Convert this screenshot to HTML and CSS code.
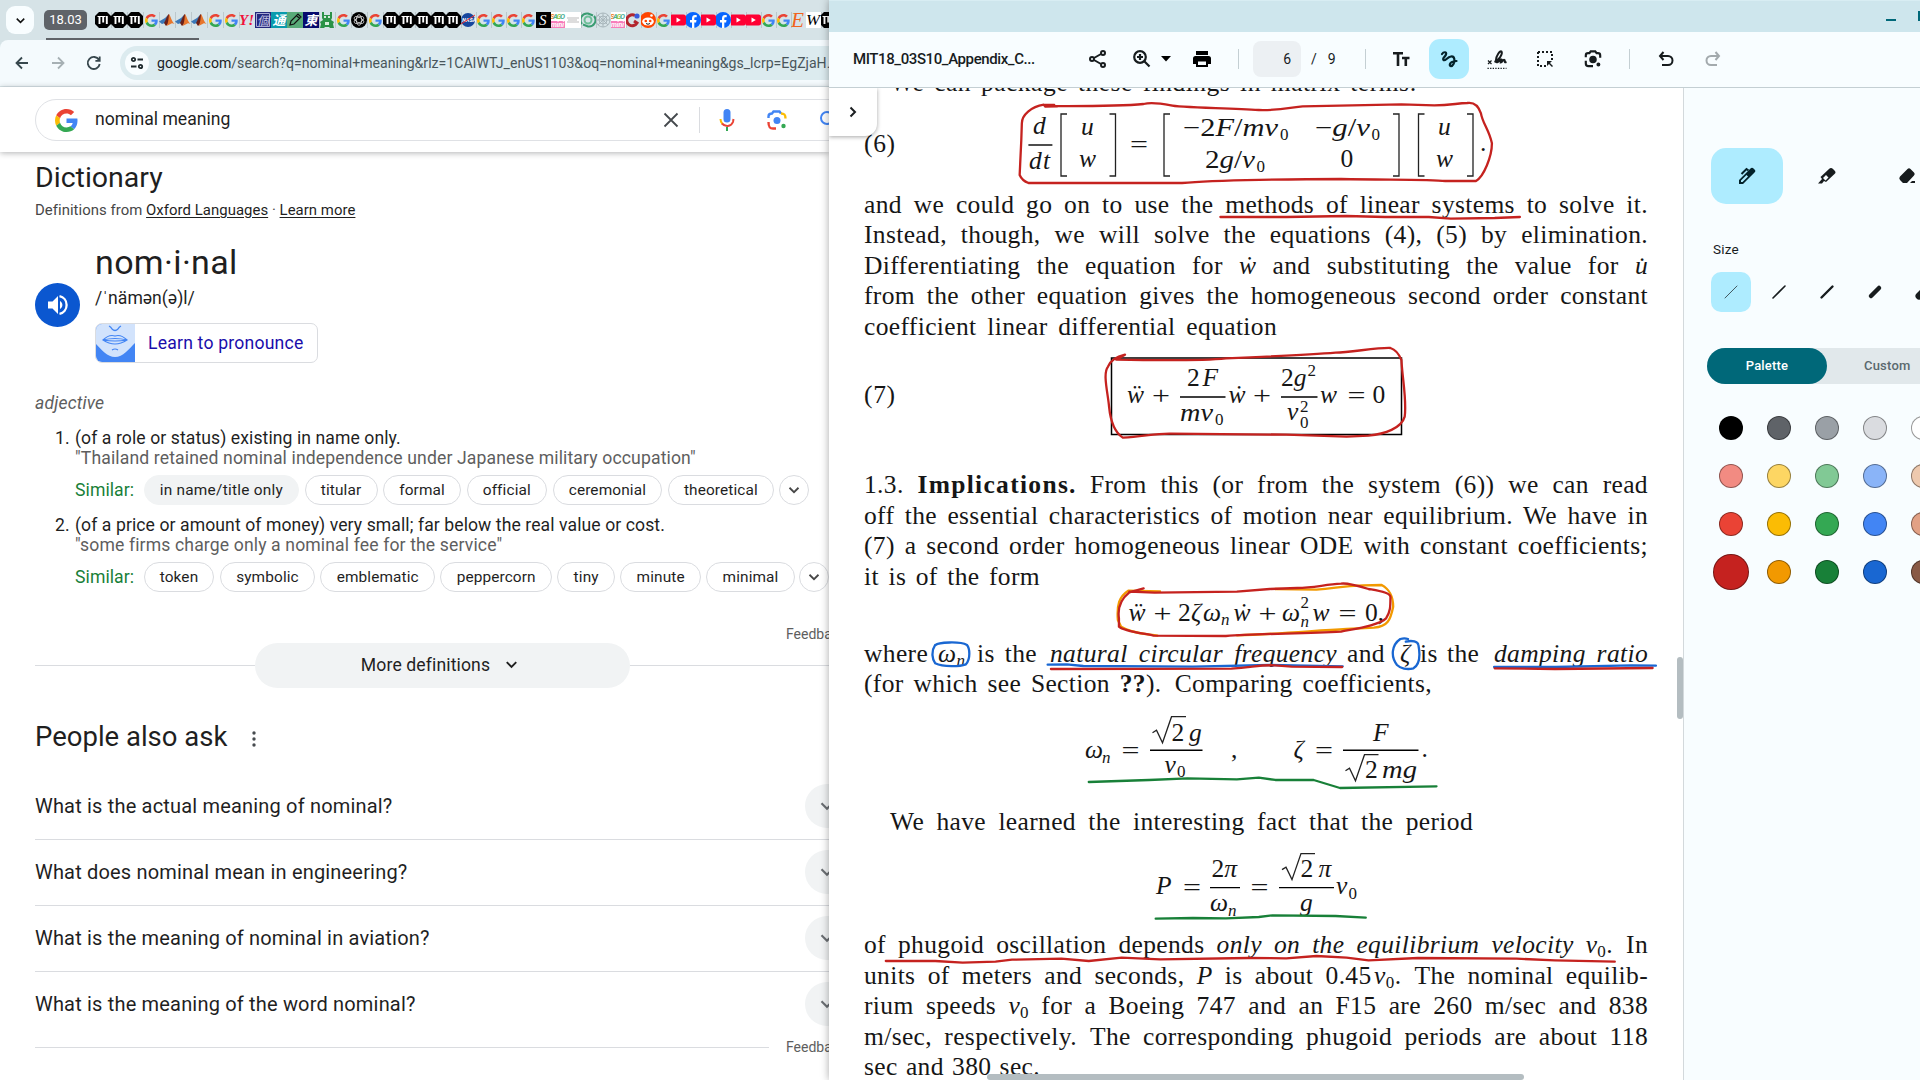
FILE: index.html
```html
<!DOCTYPE html>
<html lang="en">
<head>
<meta charset="utf-8">
<title>nominal meaning - Google Search</title>
<link rel="stylesheet" href="styles.css">
</head>
<body>
<svg class="defs" aria-hidden="true">
  <symbol id="g" viewBox="0 0 48 48"><path fill="#ea4335" d="M24 9.5c3.54 0 6.71 1.22 9.21 3.6l6.85-6.85C35.9 2.38 30.47 0 24 0 14.62 0 6.51 5.38 2.56 13.22l7.98 6.19C12.43 13.72 17.74 9.5 24 9.5z"/><path fill="#4285f4" d="M46.98 24.55c0-1.57-.15-3.09-.38-4.55H24v9.02h12.94c-.58 2.96-2.26 5.48-4.78 7.18l7.73 6c4.51-4.18 7.09-10.36 7.09-17.65z"/><path fill="#fbbc05" d="M10.53 28.59c-.48-1.45-.76-2.99-.76-4.59s.27-3.14.76-4.59l-7.98-6.19C.92 16.46 0 20.12 0 24c0 3.88.92 7.54 2.56 10.78l7.97-6.19z"/><path fill="#34a853" d="M24 48c6.48 0 11.93-2.13 15.89-5.81l-7.73-6c-2.15 1.45-4.92 2.3-8.16 2.3-6.26 0-11.57-4.22-13.47-9.91l-7.98 6.19C6.51 42.62 14.62 48 24 48z"/></symbol>
  <symbol id="m" viewBox="0 0 16 16"><path d="M4 0h8l4 4v8l-4 4H4l-4-4V4z"/><path d="M4.500 4v8M8.200 4v6.500M11.800 4v8" stroke="#fff" stroke-width="1.900" fill="none"/><path d="M2.500 4.500h8" stroke="#fff" fill="none"/></symbol>
  <symbol id="mat" viewBox="0 0 16 16"><path fill="#3b78b8" d="M0 9.500 6 6l3-3-3 8-3 1z"/><path fill="#6b2018" d="M5 11c2-3 3-8 5-9l1 8-4 4z"/><path fill="#e8762c" d="M10 2c2 3 3 8 5.500 10-2-1-3-1-4 0l-4 2c2-3 2-8 2.500-12z"/></symbol>
  <symbol id="yt" viewBox="0 0 16 16"><rect y="2.500" width="16" height="11" rx="2.500" fill="#f03"/><path d="M6.500 5.500v5l4.300-2.500z" fill="#fff"/></symbol>
  <symbol id="fb" viewBox="0 0 16 16"><circle cx="8" cy="8" r="8" fill="#0866ff"/><path d="M7 16v-5.500H5V8h2V6.500C7 4 8.300 3 10 3h1.700v2.300h-1.300c-.8 0-1.100.5-1.100 1.200V8h2.200l-.4 2.500H9.300V16z" fill="#fff"/></symbol>
  <symbol id="down" viewBox="0 0 24 24"><path d="m6 9 6 6 6-6" fill="none" stroke="currentColor" stroke-width="2.400"/></symbol>
  <symbol id="sago" viewBox="0 0 16 16"><path fill="#fff" d="M0 0h16v16H0z"/><text x="0" y="7" font-size="7.500" font-weight="700" textLength="15" fill="#4db29a"><tspan fill="#ee8a2b">S</tspan>A<tspan fill="#9bc53d">G</tspan>O</text><path fill="#f77dba" d="M0 9h15v7H0z"/><text x="1" y="15" font-size="7" font-weight="700" textLength="13" fill="#fff">mini</text></symbol>
</svg>

<main class="browser">
  <header class="tabstrip">
    <button class="tabsearch"><svg width="15" height="15"><use href="#down"/></svg></button>
    <span class="group">18.03</span>
    <div class="tabs">
      <i><svg><use href="#m"/></svg></i><i><svg><use href="#m"/></svg></i><i><svg><use href="#m"/></svg></i><i class="s"><svg><use href="#g"/></svg></i><i><svg><use href="#mat"/></svg></i><i><svg><use href="#mat"/></svg></i><i><svg><use href="#mat"/></svg></i><i class="s"><svg><use href="#g"/></svg></i><i class="s"><svg><use href="#g"/></svg></i>
      <i><svg viewBox="0 0 16 16"><text x="0" y="13" font-family="Liberation Serif" font-style="italic" font-weight="700" font-size="15" textLength="15" lengthAdjust="spacingAndGlyphs" fill="#f0133c">Y!</text></svg></i>
      <i><svg viewBox="0 0 16 16"><path fill="#23277c" d="M0 0h16v16H0z"/><path fill="none" stroke="#a9abd5" d="M1.500 1.500h13v13h-13z"/><text class="cjk" x="2" y="12.500" font-size="12" fill="#c6c7e6">個</text></svg></i>
      <i><svg viewBox="0 0 16 16"><path fill="#0a9bad" d="M0 0h16v16H0z"/><text class="cjk" x="1.500" y="13" font-size="13" font-weight="700" fill="#fff">通</text></svg></i>
      <i><svg viewBox="0 0 16 16"><path fill="#58aa78" d="M0 0h16v16H0z"/><path d="m3 13 1-4 7-7 3 3-7 7zM9.500 3.500l3 3" fill="none" stroke="#111" stroke-width="1.200"/></svg></i>
      <i><svg viewBox="0 0 16 16"><path fill="#070a6d" d="M0 0h16v16H0z"/><text class="cjk" x="1.500" y="13" font-size="13" font-weight="700" fill="#fff">東</text></svg></i>
      <i><svg viewBox="0 0 16 16"><path fill="#2b9247" d="M3 0h2v3h6V0h2v6l-1 2 3 2-1 2 1 4h-4l-1-1H6l-1 1H1l1-4-1-2 3-2-1-2z"/><circle cx="6" cy="5" r="1.100" fill="#fff"/><circle cx="10" cy="5" r="1.100" fill="#fff"/><path d="M6 10h4v3H6z" fill="#d8eedc"/></svg></i>
      <i class="s"><svg><use href="#g"/></svg></i>
      <i><svg viewBox="0 0 16 16"><circle cx="8" cy="8" r="8"/><g fill="none" stroke="#ddd" stroke-width=".8"><ellipse cx="8" cy="8" rx="2.700" ry="5.300"/><ellipse cx="8" cy="8" rx="2.700" ry="5.300" transform="rotate(60 8 8)"/><ellipse cx="8" cy="8" rx="2.700" ry="5.300" transform="rotate(120 8 8)"/></g></svg></i>
      <i class="s"><svg><use href="#g"/></svg></i><i><svg><use href="#m"/></svg></i><i><svg><use href="#m"/></svg></i><i><svg><use href="#m"/></svg></i><i><svg><use href="#m"/></svg></i>
    </div>
    <div class="tabs narrow">
      <i><svg><use href="#m"/></svg></i>
      <i><svg viewBox="0 0 16 16"><circle cx="8" cy="8" r="7" fill="#17479e"/><text x="2" y="10" font-size="5.500" font-weight="700" fill="#fff">NASA</text><path d="M1 12 15 3" stroke="#e33" /></svg></i>
      <i class="s"><svg><use href="#g"/></svg></i><i class="s"><svg><use href="#g"/></svg></i><i class="s"><svg><use href="#g"/></svg></i><i class="s"><svg><use href="#g"/></svg></i>
      <i><svg viewBox="0 0 16 16"><path d="M0 0h16v16H0z"/><text x="4" y="13" font-family="Liberation Serif" font-size="15" fill="#fff">S</text></svg></i>
      <i><svg><use href="#sago"/></svg></i>
      <i><svg viewBox="0 0 16 16"><path fill="#fff" d="M0 0h16v16H0z"/><path d="M2 6h12M3 8h9M2 10h12" stroke="#bbb"/></svg></i>
      <i><svg viewBox="0 0 16 16"><g fill="none" stroke="#3a9c72" stroke-width="2"><path d="M2 12A6.500 6.500 0 0 1 8 1.500l5 2M14 4a6.500 6.500 0 0 1-6 10.500l-5-2"/><circle cx="8" cy="8" r="3.500" stroke="#6cbf98"/></g></svg></i>
      <i><svg viewBox="0 0 16 16"><g fill="none" stroke="#a8b6bb"><circle cx="8" cy="8" r="7"/><circle cx="8" cy="8" r="4"/><path d="M8 1v14M1 8h14M3 3l10 10M13 3 3 13"/></g></svg></i>
      <i><svg><use href="#sago"/></svg></i>
      <i><svg viewBox="0 0 16 16"><path d="M10 3.500A5.500 5.500 0 1 0 12 11l-3-2" fill="none" stroke="#b3262e" stroke-width="3"/><circle cx="12" cy="4" r="2.600" fill="#3b5bdb"/></svg></i>
      <i><svg viewBox="0 0 16 16"><circle cx="8" cy="8" r="8" fill="#ff4500"/><ellipse cx="8" cy="9.500" rx="5.800" ry="4" fill="#fff"/><circle cx="11.500" cy="3.500" r="1.300" fill="#fff"/><circle cx="5.800" cy="9" r="1.300" fill="#ff4500"/><circle cx="10.200" cy="9" r="1.300" fill="#ff4500"/><path d="M6 11.500q2 1.500 4 0" fill="none" stroke="#222"/></svg></i>
      <i class="s"><svg><use href="#g"/></svg></i><i><svg><use href="#yt"/></svg></i><i><svg><use href="#fb"/></svg></i><i><svg><use href="#yt"/></svg></i><i><svg><use href="#fb"/></svg></i><i><svg><use href="#yt"/></svg></i><i><svg><use href="#yt"/></svg></i><i class="s"><svg><use href="#g"/></svg></i><i class="s"><svg><use href="#g"/></svg></i>
      <i><svg viewBox="0 0 16 16"><text x="1" y="15" font-family="Liberation Serif" font-size="21" textLength="13" lengthAdjust="spacingAndGlyphs" fill="#f1641e">E</text></svg></i>
      <i><svg viewBox="0 0 16 16"><path fill="#fff" d="M0 0h16v16H0z"/><text x="1" y="12.500" font-family="Liberation Serif" font-size="15" textLength="14" lengthAdjust="spacingAndGlyphs">W</text></svg></i>
      <i><svg><use href="#m"/></svg></i>
    </div>
  </header>
  <div class="toolbar">
    <svg width="16" height="16" viewBox="0 0 16 16" class="nav"><path d="M14 8H3M8 2.500 2.500 8 8 13.500"/></svg>
    <svg width="16" height="16" viewBox="0 0 16 16" class="nav off"><path d="M2 8h11M8 2.500 13.500 8 8 13.500"/></svg>
    <svg width="16" height="16" viewBox="0 0 16 16" class="nav"><path d="M13 5A6 6 0 1 0 13.700 9M13.700 1.500v4.300H9.400"/></svg>
    <div class="omnibox"><span class="site"><svg width="14" height="14" viewBox="0 0 14 14" fill="none" stroke="#1f2a2e" stroke-width="1.800"><circle cx="3.500" cy="3.500" r="1.700"/><path d="M7.500 3.500H13M1 10.500h5.500"/><circle cx="10.500" cy="10.500" r="1.700"/></svg></span><span class="url"><b>google.com</b>/search?q=nominal+meaning&amp;rlz=1CAIWTJ_enUS1103&amp;oq=nominal+meaning&amp;gs_lcrp=EgZjaH…</span></div>
  </div>
  <div class="searchbar">
    <div class="searchbox">
      <svg width="23" height="23"><use href="#g"/></svg>
      <span class="query">nominal meaning</span>
      <svg class="clear" width="16" height="16" viewBox="0 0 16 16"><path d="m1.500 1.500 13 13M14.500 1.500l-13 13" stroke="#45494d" stroke-width="1.800"/></svg>
      <span class="bar"></span>
      <svg class="mic" width="16" height="22" viewBox="0 0 16 22"><rect x="4.500" y="0" width="7" height="13.500" rx="3.500" fill="#4285f4"/><path d="M8 18v4" stroke="#34a853" stroke-width="2"/><path d="M1.500 10c0 2 .8 4 2 5" stroke="#fbbc04" stroke-width="2" fill="none"/><path d="M3 14.500c3 3.500 9 3.500 11-1.500l.5-3" stroke="#ea4335" stroke-width="2" fill="none"/></svg>
      <svg class="lens" width="20" height="20" viewBox="0 0 20 20" fill="none" stroke-width="2.400"><path d="M1.500 8V6.500C1.500 4 3 3.500 5 3.500l1.500-2h6l1.500 2" stroke="#4285f4"/><path d="M14 3.500c3.500 0 4.500 1 4.500 5" stroke="#fbbc04"/><path d="M1.500 12c0 5 1 6.500 4.500 6.500h3" stroke="#ea4335"/><circle cx="10" cy="10.500" r="3.500" fill="#4285f4"/><circle cx="16.500" cy="16" r="2.200" fill="#34a853"/></svg>
      <svg class="mag" width="20" height="20" viewBox="0 0 20 20"><circle cx="8" cy="8" r="6" fill="none" stroke="#4285f4" stroke-width="2"/><path d="m12 12 6 6" stroke="#4285f4" stroke-width="2.200"/></svg>
    </div>
  </div>
  <section class="results">
    <h1>Dictionary</h1>
    <p class="source">Definitions from <u>Oxford Languages</u> · <u>Learn more</u></p>
    <div class="entry">
      <span class="speak"><svg width="24" height="24" viewBox="0 0 24 24"><path fill="#fff" d="M2 8.500v7h4.500L12 21V3L6.500 8.500zM14 8v8c1.500-.8 2.400-2.300 2.400-4S15.500 8.800 14 8z"/><path d="M13.500 3.200a9 9 0 0 1 0 17.600" fill="none" stroke="#fff" stroke-width="2.300"/></svg></span>
      <div>
        <h2>nom·i·nal</h2>
        <p class="phon">/ˈnämən(ə)l/</p>
        <div class="learn"><svg width="40" height="40" viewBox="0 0 40 40"><path fill="#4285f4" d="M0 0h40v40H0z"/><path fill="#d2e3fc" d="M0 0h40v20C34 26 28 34 20 34S6 26 0 20z"/><path d="M14 3q2 1 3 3 3 3 6 0 1-2 3-3M8 17q6-6 12-4 6-2 12 4-12 8-24 0zM8 17q12-3 24 0-12 2-24 0M17 27q3-2 6 0" fill="none" stroke="#4285f4" stroke-width="1.200"/></svg><span>Learn to pronounce</span></div>
      </div>
    </div>
    <p class="pos">adjective</p>
    <ol>
      <li><span class="num">1.</span><div><p>(of a role or status) existing in name only.</p><p class="ex">"Thailand retained nominal independence under Japanese military occupation"</p>
        <div class="similar"><span class="label">Similar:</span><span class="chip on">in name/title only</span><span class="chip">titular</span><span class="chip">formal</span><span class="chip">official</span><span class="chip">ceremonial</span><span class="chip">theoretical</span><span class="chip more"><svg width="18" height="18"><use href="#down"/></svg></span></div></div></li>
      <li><span class="num">2.</span><div><p>(of a price or amount of money) very small; far below the real value or cost.</p><p class="ex">"some firms charge only a nominal fee for the service"</p>
        <div class="similar"><span class="label">Similar:</span><span class="chip">token</span><span class="chip">symbolic</span><span class="chip">emblematic</span><span class="chip">peppercorn</span><span class="chip">tiny</span><span class="chip">minute</span><span class="chip">minimal</span><span class="chip more"><svg width="18" height="18"><use href="#down"/></svg></span></div></div></li>
    </ol>
    <p class="feedback">Feedback</p>
    <div class="moredef"><hr><span class="pill">More definitions <svg width="19" height="19"><use href="#down"/></svg></span><hr></div>
    <h3>People also ask <svg width="4" height="16" viewBox="0 0 4 16" fill="#474b4f"><circle cx="2" cy="2" r="1.700"/><circle cx="2" cy="8" r="1.700"/><circle cx="2" cy="14" r="1.700"/></svg></h3>
    <div class="q">What is the actual meaning of nominal?<span><svg width="22" height="22"><use href="#down"/></svg></span></div>
    <div class="q">What does nominal mean in engineering?<span><svg width="22" height="22"><use href="#down"/></svg></span></div>
    <div class="q">What is the meaning of nominal in aviation?<span><svg width="22" height="22"><use href="#down"/></svg></span></div>
    <div class="q last">What is the meaning of the word nominal?<span><svg width="22" height="22"><use href="#down"/></svg></span></div>
    <div class="endline"><hr><span>Feedback</span></div>
  </section>
</main>

<section class="viewer">
  <div class="titlebar"><span class="min"></span><span class="max"></span></div>
  <div class="tools">
    <span class="fname">MIT18_03S10_Appendix_C...</span>
    <svg class="t-share" width="20" height="20" viewBox="0 0 20 20" fill="none" stroke="currentColor" stroke-width="2"><circle cx="4" cy="10" r="2"/><circle cx="15" cy="4" r="2"/><circle cx="15" cy="16" r="2"/><path d="m6 9 7-4M6 11l7 4"/></svg>
    <svg class="t-zoom" width="20" height="20" viewBox="0 0 20 20" fill="none" stroke="currentColor" stroke-width="2.200"><circle cx="8" cy="8" r="5.800"/><path d="m12.300 12.300 5.200 5.200M5 8h6M8 5v6"/></svg>
    <svg class="t-caret" width="10" height="6"><path d="M0 0h10L5 5.500z"/></svg>
    <svg class="t-print" width="20" height="20" viewBox="0 0 20 20"><path d="M4 2h12v4H4zM3.500 7h13A2.500 2.500 0 0 1 19 9.500V15h-3v3H4v-3H1V9.500A2.500 2.500 0 0 1 3.500 7zM6 12.500V16h8v-3.500z" fill-rule="evenodd"/></svg>
    <span class="sep t-s1"></span>
    <span class="pageno">6</span><span class="slash">/</span><span class="total">9</span>
    <span class="sep t-s2"></span>
    <svg class="t-text" width="18" height="18" viewBox="0 0 18 18" fill="none" stroke="currentColor" stroke-width="2.600"><path d="M1 3.300h10M6 3v13M10 8h7.500M13.800 8v8"/></svg>
    <span class="active"><svg width="20" height="20" viewBox="0 0 20 20" fill="none" stroke="#03222a" stroke-width="2.200" stroke-linecap="round"><path d="M3 5C4.500 2.700 8 2.500 7 5.500 6 8 3 9.500 4.500 11 6.500 12.500 8 8 12 7.500 16 7 16 12 14.500 15 13 18 10 17.500 11 15 12 12.500 15 12 17.500 12"/></svg></span>
    <svg class="t-sign" width="22" height="22" viewBox="0 0 22 22" fill="none" stroke="currentColor"><path d="M2 12.500l3.500 3.500M5.500 12.500 2 16" stroke-width="1.200"/><path d="M8.500 14C13 12 17 6 15.500 3.500 14 2 10 8 10 12c0 4 3 2 4.500-1l1 .5-.7 3c1.500 0 2.200-3.500 3.700-2.500 1 1-1 3 2 2" stroke-width="2"/><path d="M1.500 20.300h19" stroke-width="1.300" stroke-dasharray="1.300 1.300"/></svg>
    <svg class="t-sel" width="18" height="18" viewBox="0 0 18 18" fill="none" stroke="currentColor" stroke-width="2"><path d="M2 2h14v9M2 2v14h9" stroke-dasharray="2 2"/><path d="M11 11h5l-2 2 3 3-1 1-3-3-2 2z" fill="currentColor" stroke="none"/></svg>
    <svg class="t-lens" width="18" height="18" viewBox="0 0 20 20" fill="none" stroke="currentColor" stroke-width="2.400"><path d="M2 8V6q0-2.500 2.500-2.500H6l1.500-2h5l1.500 2h1.500Q18 3.500 18 6v2.500M2 12v3q0 3 3 3h5"/><circle cx="10" cy="10.500" r="3" fill="currentColor"/><circle cx="16" cy="16" r="1" fill="currentColor"/></svg>
    <span class="sep t-s3"></span>
    <svg class="t-undo" width="16" height="16" viewBox="0 0 16 16" fill="none" stroke="currentColor" stroke-width="2"><path d="M5.500 1 2 5l3.500 4M2 5h8a4.500 4.500 0 0 1 0 9H4"/></svg>
    <svg class="t-redo" width="16" height="16" viewBox="0 0 16 16" fill="none" stroke="#a3aaad" stroke-width="2"><path d="M10.500 1 14 5l-3.500 4M14 5H6a4.500 4.500 0 0 0 0 9h6"/></svg>
  </div>
  <div class="work">
    <article class="page">
      <div class="ln in first">We can package these findings in matrix terms:</div>
      <svg class="eq" viewBox="864 97 784 92" width="784" height="92">
        <text x="864" y="151.700" textLength="31">(6)</text>
        <g class="it"><text x="1033" y="134">d</text><text x="1029" y="169" textLength="21">dt</text><text x="1081" y="135">u</text><text x="1079" y="167">w</text><text x="1438" y="135">u</text><text x="1436" y="167">w</text>
        <text x="1183" y="136" textLength="95" lengthAdjust="spacingAndGlyphs"><tspan class="up">−2</tspan>F<tspan class="up">/</tspan>mv</text><text x="1315" y="136" textLength="55" lengthAdjust="spacingAndGlyphs"><tspan class="up">−</tspan>g<tspan class="up">/</tspan>v</text><text x="1205" y="168" textLength="50" lengthAdjust="spacingAndGlyphs"><tspan class="up">2</tspan>g<tspan class="up">/</tspan>v</text></g>
        <g class="sub"><text x="1280" y="140">0</text><text x="1371.500" y="140">0</text><text x="1256.500" y="172">0</text></g>
        <text x="1340.500" y="167">0</text><text x="1130" y="153" textLength="18" lengthAdjust="spacingAndGlyphs">=</text><text x="1480" y="151">.</text>
        <path class="rule" d="M1028.400 145h24"/>
        <path class="brk" d="M1067 114h-6v62h6M1109.500 114h6v62h-6M1170 114h-6v62h6M1393 114h6v62h-6M1424.500 114h-6v62h6M1467 114h6v62h-6"/>
      </svg>
      <div class="ln j">and we could go on to use the methods of linear systems to solve it.</div>
      <div class="ln j">Instead, though, we will solve the equations (4), (5) by elimination.</div>
      <div class="ln j">Differentiating the equation for <em>ẇ</em> and substituting the value for <em>u̇</em></div>
      <div class="ln j">from the other equation gives the homogeneous second order constant</div>
      <div class="ln"><span class="fit w413">coefficient linear differential equation</span></div>
      <svg class="eq" viewBox="864 341 784 128.500" width="784" height="128.500">
        <text x="864" y="403" textLength="31">(7)</text>
        <rect x="1111.500" y="358" width="290" height="76.500" fill="none" stroke="#000" stroke-width="1.500"/>
        <g class="it"><text x="1127" y="402.700">ẅ</text><text x="1187" y="386" textLength="31"><tspan class="up">2</tspan>F</text><text x="1180" y="420.700" textLength="33" lengthAdjust="spacingAndGlyphs">mv</text><text x="1228.500" y="402.700">ẇ</text><text x="1281" y="386"><tspan class="up">2</tspan>g</text><text x="1287" y="420">v</text><text x="1320" y="402.700">w</text></g>
        <g class="sub"><text x="1215" y="425">0</text><text x="1307.500" y="376">2</text><text x="1300" y="411.500">2</text><text x="1300" y="427.500">0</text></g>
        <text x="1152" y="404" textLength="18" lengthAdjust="spacingAndGlyphs">+</text><text x="1253" y="404" textLength="18" lengthAdjust="spacingAndGlyphs">+</text><text x="1347.500" y="404" textLength="18" lengthAdjust="spacingAndGlyphs">=</text><text x="1372.500" y="402.700">0</text>
        <path class="rule" d="M1180 397h45.500M1281 397h36.500"/>
      </svg>
      <div class="ln j">1.3. <b class="head">Implications.</b>&ensp;From this (or from the system (6)) we can read</div>
      <div class="ln j">off the essential characteristics of motion near equilibrium. We have in</div>
      <div class="ln j">(7) a second order homogeneous linear ODE with constant coefficients;</div>
      <div class="ln"><span class="fit w176">it is of the form</span></div>
      <svg class="eq" viewBox="864 591 784 46.500" width="784" height="46.500">
        <g class="it"><text x="1128.500" y="620.700">ẅ</text><text x="1191" y="620.700">ζ</text><text x="1203" y="620.700">ω</text><text x="1233.500" y="620.700">ẇ</text><text x="1282" y="620.700">ω</text><text x="1312.500" y="620.700">w</text></g>
        <g class="sub"><text class="si" x="1221" y="625">n</text><text class="si" x="1300.500" y="627">n</text><text x="1300.500" y="607.500">2</text></g>
        <text x="1153.500" y="622" textLength="18" lengthAdjust="spacingAndGlyphs">+</text><text x="1178" y="620.700">2</text><text x="1258.500" y="622" textLength="18" lengthAdjust="spacingAndGlyphs">+</text><text x="1338.500" y="622" textLength="18" lengthAdjust="spacingAndGlyphs">=</text><text x="1365" y="620.700">0,</text>
      </svg>
      <div class="ln words"><span>where</span><span class="wn"><em>ω</em><sub><em>n</em></sub></span><span>is</span><span class="g1">the</span><em class="nat">natural circular frequency</em><span class="and">and</span><em class="ze">ζ</em><span class="is2">is</span><span class="g1">the</span><em class="damp">damping ratio</em></div>
      <div class="ln"><span class="fit w568">(for which see Section <b>??</b>).&ensp;Comparing coefficients,</span></div>
      <svg class="eq" viewBox="864 698.300 784 107.700" width="784" height="107.700">
        <g class="it"><text x="1085" y="758.700">ω</text><text x="1189" y="741">g</text><text x="1164.500" y="773">v</text><text x="1293.500" y="758.700">ζ</text><text x="1373" y="741">F</text><text x="1382" y="778.500" textLength="35" lengthAdjust="spacingAndGlyphs">mg</text></g>
        <g class="sub"><text class="si" x="1102" y="763">n</text><text x="1177" y="777.500">0</text></g>
        <text x="1121.500" y="759" textLength="18" lengthAdjust="spacingAndGlyphs">=</text><text x="1171.500" y="741">2</text><text x="1231" y="758">,</text><text x="1315" y="759" textLength="18" lengthAdjust="spacingAndGlyphs">=</text><text x="1365" y="778.500">2</text><text x="1421.500" y="757">.</text>
        <path class="rule" d="M1150 750.500h52.500M1343 750.500h75.500"/>
        <path class="rad" d="m1152.500 733 4-2.500 6 12.500 9-26H1186M1345.500 771l4-2.500 6 12.500 9-26H1378.500"/>
      </svg>
      <div class="ln in"><span class="fit w583">We have learned the interesting fact that the period</span></div>
      <svg class="eq" viewBox="864 836.400 784 93.100" width="784" height="93.100">
        <g class="it"><text x="1156" y="894">P</text><text x="1211.500" y="877"><tspan class="up">2</tspan>π</text><text x="1210" y="911.700">ω</text><text x="1318.500" y="877">π</text><text x="1300" y="911.700">g</text><text x="1336" y="894">v</text></g>
        <g class="sub"><text class="si" x="1228" y="916">n</text><text x="1348.500" y="899">0</text></g>
        <text x="1183" y="896" textLength="18" lengthAdjust="spacingAndGlyphs">=</text><text x="1250.500" y="896" textLength="18" lengthAdjust="spacingAndGlyphs">=</text><text x="1300.500" y="877">2</text>
        <path class="rule" d="M1210 888h30M1279 888h55"/>
        <path class="rad" d="m1282 870 4-2.500 6 12.500 9-26H1315"/>
      </svg>
      <div class="ln j">of phugoid oscillation depends <em>only on the equilibrium velocity v</em><sub>0</sub>.&ensp;In</div>
      <div class="ln j">units of meters and seconds, <em>P</em> is about 0.45&hairsp;<em>v</em><sub>0</sub>.&ensp;The nominal equilib-</div>
      <div class="ln j">rium speeds <em>v</em><sub>0</sub> for a Boeing 747 and an F15 are 260 m/sec and 838</div>
      <div class="ln j">m/sec, respectively.&ensp;The corresponding phugoid periods are about 118</div>
      <div class="ln"><span class="fit w176">sec and 380 sec.</span></div>
    </article>
    <svg class="ink" viewBox="829 88 854 992" width="854" height="992">
      <g transform="translate(820 80) scale(.5485 .3333)"><path d="M433 79 411 80 408 74C385 80 368 105 368 130L367 180 365 250 364 285C368 300 375 306 380 309L660 309C720 300 880 297 950 297 1030 300 1110 297 1140 303L1196 303C1210 290 1225 230 1225 190 1220 150 1208 130 1205 100 1200 75 1192 66 1180 69 1160 70 1150 76 1120 76L1060 73 880 79C850 85 830 92 800 90 740 84 650 82 640 76 610 67 600 68 590 72 540 80 430 78 410 78M410 75 427 75M730 411 850 411 960 408 1030 411 1110 411 1150 416 1230 414 1276 411"/></g>
      <g transform="translate(820 340) scale(.5485 .3333)"><path d="M556 44C540 50 530 60 525 80 515 100 525 160 527 200 530 250 540 280 552 293 590 290 610 280 640 281L850 284 960 290 1000 287C1030 282 1060 265 1066 230 1070 180 1062 120 1060 60 1055 40 1048 28 1040 24 1020 22 970 36 940 38 890 45 830 49 740 55 700 62 640 62 540 59L556 44"/></g>
      <g transform="translate(820 560) scale(.5485 .3333)">
        <path class="orange" d="M830 87 905 89C940 85 950 78 990 76L1024 75C1040 90 1045 110 1045 140 1040 180 1035 200 1010 203L960 207C900 212 840 222 760 226M620 94 562 92C545 110 541 135 543 180L549 200C570 222 600 222 615 227"/>
        <path d="M590 85 564 97C550 115 542 140 545 175L545 200C555 215 590 220 608 227L740 228C800 220 880 222 950 215 980 205 1020 195 1032 175 1040 155 1040 140 1040 110 1038 95 1010 90 1000 87 980 77 960 68 950 71 920 74 900 83 870 84L820 87 760 95 610 98 564 95"/>
        <path class="blue" d="M210 255C202 275 205 300 210 310 225 322 255 320 266 313 275 295 273 265 268 255 255 243 215 247 211 255M1068 245C1080 240 1090 245 1091 255 1095 290 1092 315 1082 325 1070 330 1058 325 1052 315 1040 290 1042 255 1058 237 1065 234 1070 236 1072 237M415 314 450 313 480 318 680 320 820 315 953 319M1229 321 1340 321 1480 316 1524 317"/>
        <path d="M421 327 750 326C790 322 800 314 830 316L860 320 952 321M1230 325 1340 327 1518 324"/>
        <path class="green" d="M490 666 600 660 670 655 760 658 800 653 830 660 900 660 948 684 1124 679"/></g>
      <g transform="translate(820 820) scale(.5485 .3333)"><path class="green" d="M612 296 680 294 740 295 800 291 825 286 940 288 995 293"/><path d="M120 423 210 423 260 428 320 425 350 419 440 416 490 423 550 413 620 418 780 414 850 415 905 408 960 413 1000 421 1090 414 1270 416 1340 421 1449 425"/></g>
    </svg>
    <span class="vscroll"></span><span class="hscroll"></span>
    <span class="expand"><svg width="8" height="12" viewBox="0 0 8 12"><path d="m1.500 1.500 4.500 4.500-4.500 4.500" fill="none" stroke="#1b1f21" stroke-width="2"/></svg></span>
    <aside class="side">
      <div class="pens">
        <span class="pen on"><svg width="18" height="18" viewBox="0 0 18 18"><path d="M1 17v-4L11 3l1.500-1.500a2 2 0 0 1 3 0l1 1a2 2 0 0 1 0 3L5 17zM3 15h1.500l5.500-5.500L8.500 8 3 13.500z" fill="#03222a" fill-rule="evenodd"/><path d="m3.500 7 5-5 2 1.500" fill="none" stroke="#03222a" stroke-width="2"/></svg></span>
        <span class="pen"><svg width="18" height="18" viewBox="0 0 18 18"><path d="M0 16.500 4 12l-1.500-2L11 2q2-2 4 0l1.500 1.500q2 2 0 3.500L8 15l-2-1-2 2.500zM8 8l-3 3 2.500 2.500 3-3z" fill="#171c1e" fill-rule="evenodd"/></svg></span>
        <span class="pen"><svg width="18" height="18" viewBox="0 0 18 18"><path d="M2 9.500 9.500 2q1.500-1.500 3 0L16 5.500q1.500 1.500 0 3L9 16H5l-3-3q-1.500-2 0-3.500zM12 16l2-2h3v2z" fill="#171c1e"/></svg></span>
      </div>
      <p class="sizelabel">Size</p>
      <div class="sizes"><span class="on"><svg viewBox="0 0 16 16"><path d="m2 14 12-12" stroke-width="1"/></svg></span><span><svg viewBox="0 0 16 16"><path d="m2 14 12-12" stroke-width="1.600"/></svg></span><span><svg viewBox="0 0 16 16"><path d="m2.500 13.500 11-11" stroke-width="2.400"/></svg></span><span><svg viewBox="0 0 16 16"><path d="m4 12 8-8" stroke-width="4.500"/></svg></span><span><svg viewBox="0 0 16 16"><path d="m4 12 8-8" stroke-width="7"/></svg></span></div>
      <div class="seg"><b>Palette</b><span>Custom</span></div>
      <div class="dots">
        <i class="c1"></i><i class="c2"></i><i class="c3"></i><i class="c4"></i><i class="c5"></i>
        <i class="c6"></i><i class="c7"></i><i class="c8"></i><i class="c9"></i><i class="c10"></i>
        <i class="c11"></i><i class="c12"></i><i class="c13"></i><i class="c14"></i><i class="c15"></i>
        <i class="c16 sel"></i><i class="c17"></i><i class="c18"></i><i class="c19"></i><i class="c20"></i>
      </div>
    </aside>
  </div>
</section>
</body>
</html>
```
FILE: styles.css
```css
* { box-sizing: border-box; }
body { margin: 0; width: 1920px; height: 1080px; overflow: hidden; position: relative; background: #fff; font-family: Roboto, sans-serif; color: #1f1f1f; }
p, h1, h2, h3, ol { margin: 0; padding: 0; font-weight: 400; }
hr { border: 0; height: 1px; background: #dadce0; margin: 0; }
svg { flex: none; display: block; }
.defs { position: absolute; width: 0; height: 0; }
.browser { width: 829px; height: 1080px; overflow: hidden; }

.tabstrip { height: 40px; background: #d6e3e7; display: flex; align-items: center; padding-left: 6px; position: relative; }
.tabstrip::after { content: ""; position: absolute; left: 46px; top: 38px; width: 153px; height: 2px; background: #5f6368; }
.tabsearch { width: 28px; height: 28px; border: 0; border-radius: 9px; background: #f8fdff; padding: 0; display: flex; align-items: center; justify-content: center; flex: none; color: #111; }
.tabsearch path { stroke-width: 3; }
.group { margin-left: 10px; width: 43px; height: 20px; border-radius: 5px; background: #5f6368; color: #fff; font-size: 13px; line-height: 20px; text-align: center; flex: none; }
.tabs { margin-left: 8px; display: flex; width: 350.5px; flex: none; }
.tabs.narrow { margin: 0; }
.tabs i { width: 16px; height: 16px; flex: none; display: flex; align-items: center; justify-content: center; overflow: hidden; box-shadow: 1px 0 0 #bcc8cc; }
.tabs i svg { width: 16px; height: 16px; }
.tabs.narrow i { width: 15px; }
.tabs .s svg { width: 13px; height: 13px; }
.cjk { font-family: "Noto Sans CJK JP", sans-serif; }

.toolbar { height: 47px; background: #f4fafd; border-bottom: 1px solid #d9e5e9; display: flex; align-items: center; padding-left: 14px; border-radius: 8px 0 0; box-shadow: -8px -8px 0 #d6e3e7; }
.nav { margin-right: 20px; fill: none; stroke: #37474d; stroke-width: 1.8; }
.nav.off { stroke: #a6b0b4; }
.omnibox { height: 34px; flex: 1; margin-left: -2px; background: #dcebef; border-radius: 17px 0 0 17px; display: flex; align-items: center; padding-left: 5px; }
.site { width: 24px; height: 24px; border-radius: 50%; background: #f8fdff; display: flex; align-items: center; justify-content: center; flex: none; }
.url { margin-left: 8px; font-size: 14.1px; color: #49565b; white-space: nowrap; }
.url b { font-weight: 400; color: #1a2226; }

.searchbar { height: 65px; background: #fff; padding: 12px 0 0 35px; box-shadow: 0 1px 6px rgba(32,33,36,.35); position: relative; }
.searchbox { height: 42px; width: 900px; border: 1px solid #dfe1e5; border-radius: 21px; display: flex; align-items: center; padding-left: 19px; }
.query { font-size: 17.6px; margin-left: 17px; width: 568px; margin-bottom: 3px; }
.bar { width: 1px; height: 26px; background: #dadce0; margin: 0 19px 0 20px; }
.lens { margin-left: 32px; }
.mag { margin-left: 32px; }

.results { padding: 8px 0 0 35px; height: 928px; width: 829px; overflow: hidden; }
h1 { font-size: 28.5px; line-height: 36px; }
.source { margin-top: 2px; font-size: 14.9px; line-height: 24px; color: #474747; letter-spacing: .05px; }
.source u { color: #1f1f1f; text-underline-offset: 2px; }
.entry { display: grid; grid-template-columns: 60px 1fr; margin-top: 20px; }
.speak { width: 45px; height: 44px; border-radius: 50%; background: #0b57d0; margin-top: 41px; display: flex; align-items: center; justify-content: center; }
h2 { font-size: 34px; line-height: 40px; letter-spacing: .35px; }
.phon { font-size: 17.6px; line-height: 24px; margin-top: 4px; }
.learn { margin-top: 13px; width: 223px; height: 40px; border: 1px solid #dadce0; border-radius: 7px; display: flex; align-items: center; overflow: hidden; color: #1a0dab; font-size: 17.6px; }
.learn svg { margin-left: -1px; }
.learn span { margin-left: 13px; letter-spacing: .2px; }
.pos { margin-top: 28px; font-size: 17.6px; line-height: 24px; font-style: italic; color: #5e5e5e; letter-spacing: .15px; }
ol { list-style: none; margin-top: 13px; font-size: 17.6px; line-height: 20px; white-space: nowrap; letter-spacing: .08px; }
li { display: flex; height: 87px; }
.num { width: 40px; padding-left: 20px; flex: none; }
.ex { color: #5e5e5e; letter-spacing: .13px; }
.similar { display: flex; align-items: center; gap: 5.5px; margin-top: 7px; height: 30px; }
.label { color: #188038; width: 63px; padding-bottom: 1px; }
.chip { height: 30px; border: 1px solid #dadce0; border-radius: 15px; padding: 0 15.2px; font-size: 15.4px; line-height: 28px; letter-spacing: .12px; }
.chip.on { background: #f1f3f4; border-color: #f1f3f4; letter-spacing: .25px; }
.chip.more { width: 30px; padding: 0; display: flex; align-items: center; justify-content: center; color: #474747; flex: none; margin-left: -1px; }
.feedback { margin: 22px 0 0 751px; font-size: 14px; line-height: 20px; color: #5e5e5e; }
.moredef { display: flex; align-items: center; margin-top: -1px; height: 45px; }
.moredef hr { flex: 1; }
.moredef hr:first-child { flex: 0 0 220px; }
.pill { width: 375px; height: 45px; border-radius: 23px; background: #f1f3f4; display: flex; align-items: center; justify-content: center; gap: 12px; font-size: 17.6px; letter-spacing: .12px; padding: 0 3px 2px 0; }
h3 { font-size: 27.5px; line-height: 36px; margin: 31px 0 19px; display: flex; align-items: center; gap: 25px; }
h3 svg { margin-top: 3px; }
.q { height: 66px; width: 838px; display: flex; align-items: center; font-size: 20px; letter-spacing: .18px; padding-bottom: 2px; position: relative; border-bottom: 1px solid #dadce0; }
.q.last { border: 0; height: 65px; }
.q span { margin-left: auto; margin-right: 24px; width: 44px; height: 44px; border-radius: 50%; background: #f1f3f4; display: flex; align-items: center; justify-content: center; color: #6b6f73; }
.endline { display: flex; align-items: center; gap: 17px; height: 20px; font-size: 14px; color: #5e5e5e; }
.endline hr { flex: 0 0 734px; }

.viewer { position: absolute; left: 829px; top: 0; width: 1091px; height: 1080px; background: #f8fdff; box-shadow: 0 0 8px rgba(0,0,0,.35); }
.titlebar { height: 32px; background: #cee6ed; display: flex; align-items: flex-start; border-top: 1px solid #d8edf3; overflow: hidden; }
.min { width: 10px; height: 2px; background: #006879; margin: 18px 0 0 1057px; flex: none; }
.max { width: 8px; height: 10px; background: #006879; margin: 10px 0 0 22px; flex: none; }
.tools { height: 56px; border-bottom: 1px solid #c4cfd3; display: flex; align-items: center; padding: 0 0 1px 24px; color: #171c1e; }
.fname { font-size: 15px; font-weight: 500; letter-spacing: -.4px; width: 235px; white-space: nowrap; }
.t-zoom { margin-left: 24px; }
.t-caret { margin-left: 9px; }
.t-print { margin-left: 21px; }
.sep { width: 1px; height: 20px; background: #c4cfd3; }
.t-s1 { margin-left: 26px; }
.pageno { margin-left: 14px; width: 48px; height: 36px; background: #ecf0f3; border-radius: 8px; text-align: right; padding-right: 10px; font-size: 14px; line-height: 36px; }
.slash { margin-left: 10px; font-size: 14px; }
.total { margin-left: 11px; font-size: 14px; width: 9px; }
.t-s2 { margin-left: 28px; }
.t-text { margin-left: 26px; }
.active { margin-left: 19px; width: 40px; height: 40px; border-radius: 11px; background: #aeecff; display: flex; align-items: center; justify-content: center; }
.t-sign { margin-left: 17px; }
.t-sel { margin-left: 28px; }
.t-lens { margin-left: 30px; }
.t-s3 { margin-left: 27px; }
.t-undo { margin-left: 28px; }
.t-redo { margin-left: 31px; }

.work { height: 992px; display: flex; position: relative; overflow: hidden; }
.page { width: 854px; height: 992px; overflow: hidden; background: #fff; padding-left: 35px; flex: none; font-family: "Liberation Serif", serif; font-size: 25.5px; color: #161616; }
.ln { height: 30.4px; line-height: 32.2px; width: 784px; white-space: nowrap; letter-spacing: .36px; position: relative; }
.ln.in { padding-left: 26px; }
.ln.first { margin-top: -21.4px; letter-spacing: .5px; word-spacing: 3px; }
.head { letter-spacing: 1.3px; }
.j { text-align-last: justify; }
.fit { display: inline-block; text-align-last: justify; }
.w413 { width: 413px; }
.w176 { width: 176px; }
.w568 { width: 568px; }
.w583 { width: 583px; }
.page sub { font-size: 17px; line-height: 0; vertical-align: -4px; }
.eq { display: block; overflow: visible; }
.eq text { fill: #161616; }
.it { font-style: italic; }
.up { font-style: normal; }
.sub { font-size: 17px; }
.si { font-style: italic; }
.rule { stroke: #000; stroke-width: 1.4; }
.brk, .rad { fill: none; stroke: #222; stroke-width: 1.3; }
.words { display: flex; }
.words > * { flex: none; }
.words > :first-child { width: 74px; }
.wn { width: 39px; }
.words .g1 { margin-left: 10px; }
.words .nat { position: absolute; left: 186px; text-align-last: justify; width: 287px; }
.and { position: absolute; left: 483px; }
.ze { position: absolute; left: 536px; }
.is2 { position: absolute; left: 556px; }
.words .is2 + .g1 { position: absolute; left: 573px; }
.damp { position: absolute; left: 630px; width: 154px; text-align-last: justify; }
.ink { position: absolute; left: 0; top: 0; }
.ink path { fill: none; stroke: #c5221f; stroke-width: 2.3; vector-effect: non-scaling-stroke; stroke-linecap: round; stroke-linejoin: round; }
.ink .orange { stroke: #f29900; }
.ink .blue { stroke: #1967d2; }
.ink .green { stroke: #188038; }
.vscroll { position: absolute; left: 848px; top: 569px; width: 6px; height: 62px; background: #b4bdc1; border-radius: 3px; }
.hscroll { position: absolute; left: 158px; top: 986px; width: 537px; height: 6px; background: #b4bdc1; border-radius: 3px; }
.expand { position: absolute; left: 0; top: 0; width: 48px; height: 48px; background: #fff; border-radius: 0 0 12px 0; box-shadow: 0 1px 4px rgba(0,0,0,.35); display: flex; align-items: center; justify-content: center; }

.side { width: 237px; border-left: 1px solid #d3d9dc; background: #f8fdff; padding: 60px 0 0 27px; overflow: hidden; flex: none; color: #171c1e; }
.pens { display: flex; gap: 8px; }
.pen { width: 72px; height: 56px; border-radius: 15px; display: flex; align-items: center; justify-content: center; flex: none; }
.on { background: #aeecff; }
.sizelabel { font-size: 13.5px; line-height: 20px; margin: 35px 0 0 2px; letter-spacing: .2px; }
.sizes { display: flex; gap: 8px; margin-top: 13px; }
.sizes span { width: 40px; height: 40px; border-radius: 10px; display: flex; align-items: center; justify-content: center; flex: none; }
.sizes svg { width: 16px; height: 16px; stroke: #171c1e; stroke-linecap: round; }
.sizes .on svg { opacity: .7; }
.seg { margin: 36px 0 0 -4px; height: 36px; width: 260px; border-radius: 18px; background: #e1e8eb; display: flex; font-size: 13px; line-height: 36px; letter-spacing: .2px; }
.seg b { width: 120px; border-radius: 18px; background: #006879; color: #fff; text-align: center; font-weight: 500; }
.seg span { margin-left: 37px; font-weight: 500; color: #5a696e; }
.dots { display: grid; grid-template-columns: repeat(5, 48px); grid-auto-rows: 48px; place-items: center; margin: 20px 0 0 -4px; }
.dots i { width: 24px; height: 24px; border-radius: 50%; border: 1px solid rgba(0,0,0,.4); }
.dots .sel { width: 36px; height: 36px; }
.c1 { background: #000; } .c2 { background: #5f6368; } .c3 { background: #9aa0a6; } .c4 { background: #dadce0; } .c5 { background: #fff; }
.c6 { background: #f28b82; } .c7 { background: #fdd663; } .c8 { background: #81c995; } .c9 { background: #8ab4f8; } .c10 { background: #eec9ae; }
.c11 { background: #ea4335; } .c12 { background: #fbbc04; } .c13 { background: #34a853; } .c14 { background: #4285f4; } .c15 { background: #e2a185; }
.c16 { background: #c5221f; } .c17 { background: #f29900; } .c18 { background: #188038; } .c19 { background: #1967d2; } .c20 { background: #885945; }
```
